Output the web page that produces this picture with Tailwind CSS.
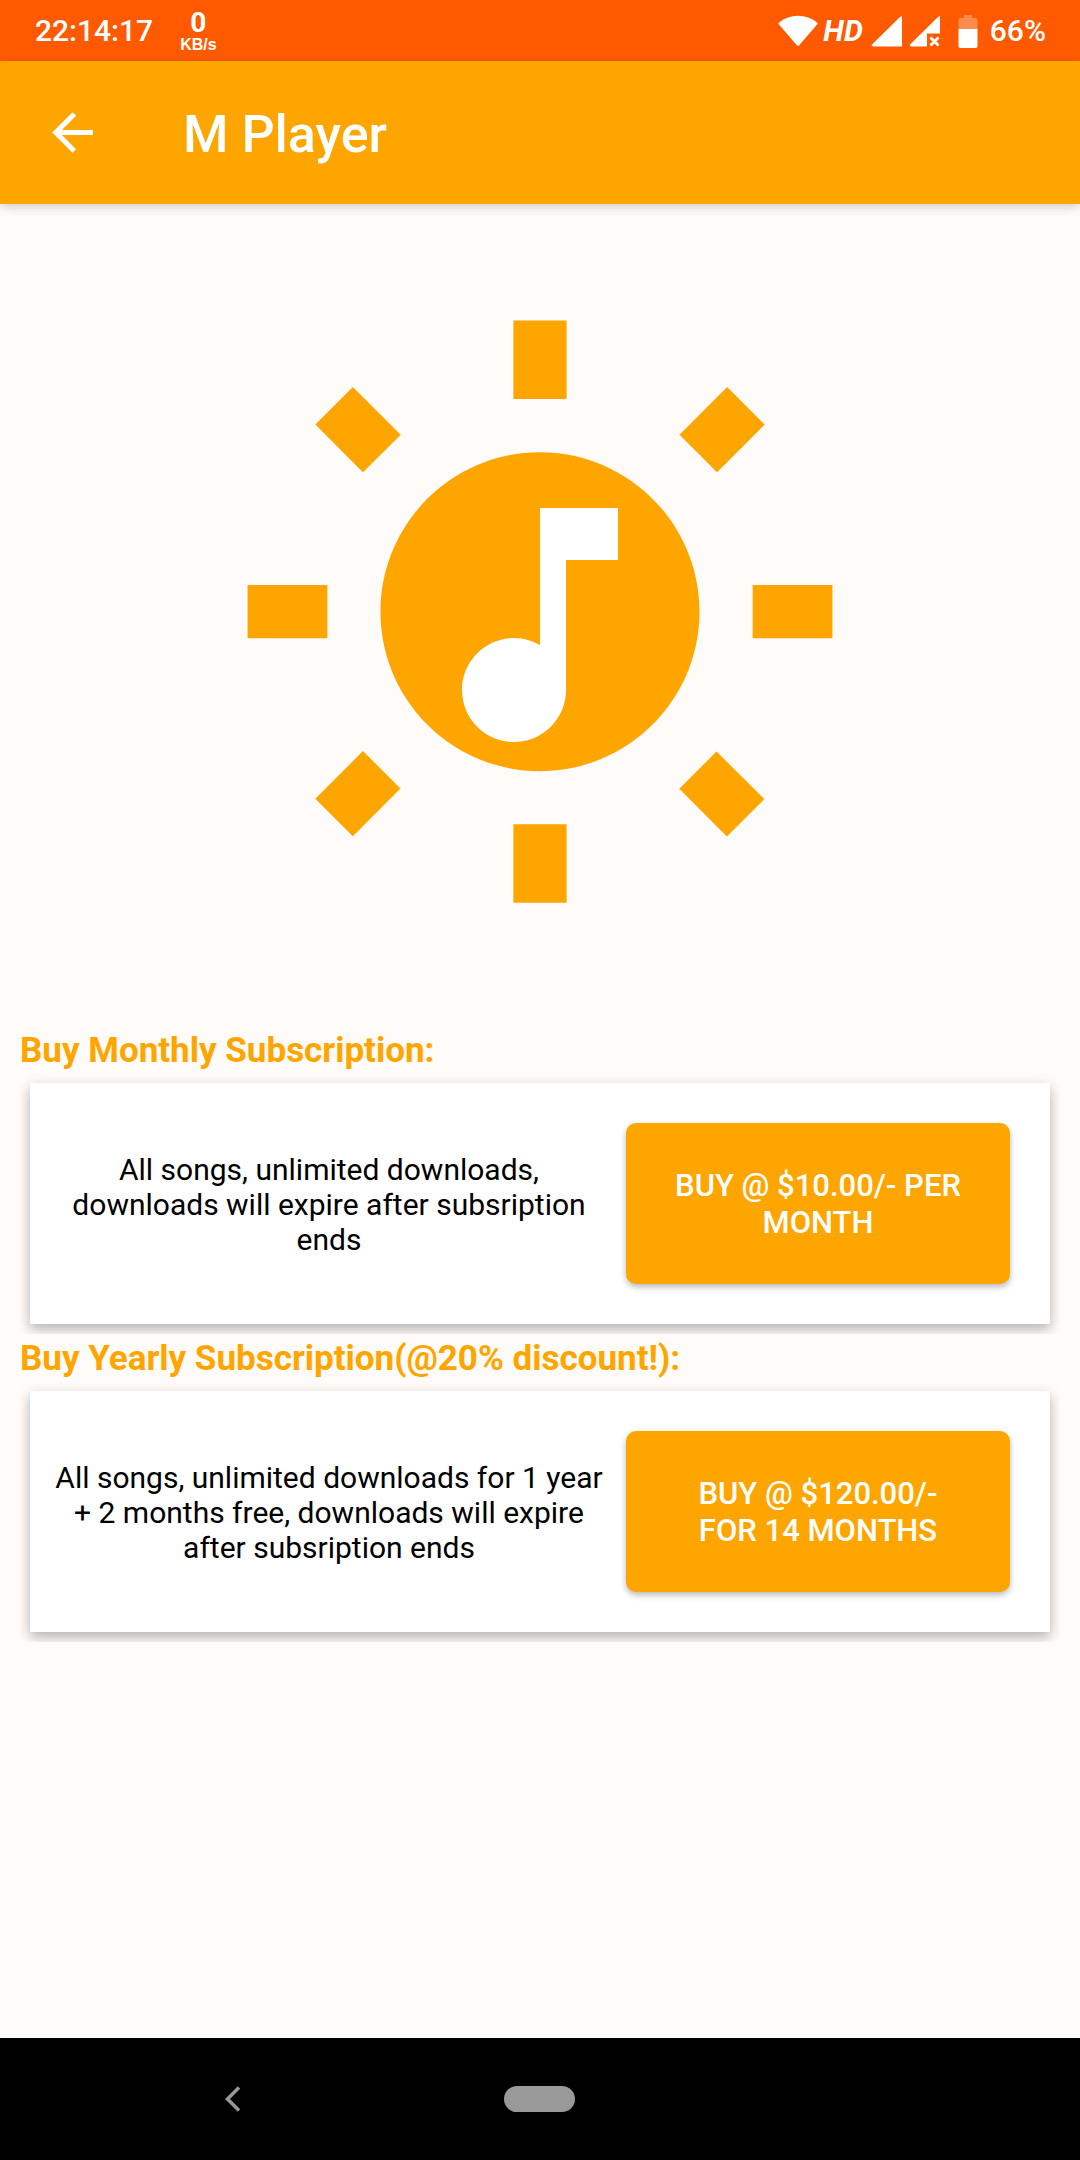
<!DOCTYPE html>
<html lang="en">
<head>
<meta charset="utf-8">
<meta name="viewport" content="width=device-width, initial-scale=1">
<title>M Player</title>
<script src="https://cdn.jsdelivr.net/npm/@tailwindcss/browser@4"></script>
</head>
<body class="flex min-h-screen flex-col bg-[#fffbf8] font-['Roboto',sans-serif] text-black">

<!-- Status bar -->
<div class="flex h-[61px] items-center justify-between bg-[#ff5a00] pr-[34px] pl-[35px] text-white">
  <div class="flex items-center gap-[27px]">
    <span class="text-[30px] leading-[35px] font-medium">22:14:17</span>
    <div class="flex flex-col items-center font-bold">
      <span class="text-[28px] leading-[28px]">0</span>
      <span class="font-['Liberation_Sans',sans-serif] text-[16px] leading-[16px]">KB/s</span>
    </div>
  </div>
  <div class="flex items-center">
    <svg class="h-8 w-10" viewBox="0 0 40 32" fill="#fff" stroke="#fff" stroke-width="2" stroke-linejoin="round" aria-hidden="true"><path d="M1.500 8.500C12-.5 28-.5 38.500 8.500L20 30z"/></svg>
    <span class="ml-[5px] text-[30px] leading-[35px] font-bold italic">HD</span>
    <svg class="ml-2 h-8 w-[31px]" viewBox="0 0 31 32" fill="#fff" aria-hidden="true"><path d="M31 1.500V31.500H2Q0 31 1 29.500L29 2Q30.500 1 31 1.500z"/></svg>
    <svg class="ml-[7px] h-8 w-[31px]" viewBox="0 0 31 32" aria-hidden="true"><path fill="#fff" d="M31 1.500V18.500H18V31.500H2Q0 31 1 29.500L29 2Q30.500 1 31 1.500z"/><path d="M21.500 22.500l8 8m0-8l-8 8" stroke="#fff" stroke-width="2.800"/></svg>
    <svg class="ml-[18px] h-[34px] w-5" viewBox="0 0 20 34" fill="#fff" aria-hidden="true"><path fill-opacity=".3" d="M6 1h8v3h3.500Q19.500 4 19.500 6v9H.5V6Q.5 4 2.500 4H6z"/><path d="M.5 15h19v17q0 2-2 2h-15q-2 0-2-2z"/></svg>
    <span class="ml-3 text-[30px] leading-[35px] font-medium">66%</span>
  </div>
</div>

<!-- App bar -->
<header class="flex h-[143px] items-center bg-[#ffa500] pl-9 text-white shadow-[0_3px_10px_rgba(0,0,0,0.18)]">
  <button type="button" aria-label="Back" class="flex size-[72px] items-center justify-center">
    <svg class="size-[61px]" viewBox="0 0 24 24" fill="#fff" aria-hidden="true"><path d="M20 11H7.830l5.590-5.590L12 4l-8 8 8 8 1.410-1.410L7.830 13H20v-2z"/></svg>
  </button>
  <h1 class="ml-[75px] pt-1 text-[52px] leading-[61px] font-medium">M Player</h1>
</header>

<main class="flex-1 px-5 pt-[102px]">
  <!-- Sun with a music note -->
  <svg class="mx-auto block size-[638px]" viewBox="0 0 638 638" role="img" aria-label="M Player logo">
    <path fill="#ffa500" transform="scale(26.583)" d="M6.760 4.840l-1.800-1.790-1.410 1.410 1.790 1.790 1.420-1.410zM4 10.500H1v2h3v-2zm9-9.950h-2V3.500h2V.55zm7.450 3.910l-1.410-1.410-1.790 1.790 1.410 1.410 1.790-1.790zm-3.210 13.700l1.790 1.800 1.410-1.410-1.800-1.790-1.400 1.400zM20 10.500v2h3v-2h-3zm-8-5c-3.310 0-6 2.690-6 6s2.690 6 6 6 6-2.690 6-6-2.690-6-6-6zm-1 16.950h2V19.500h-2v2.950zm-7.450-3.910l1.410 1.410 1.790-1.800-1.410-1.410-1.790 1.800z"/>
    <path fill="#fff" transform="translate(163 163) scale(13)" d="M12 3v10.550c-.59-.34-1.270-.55-2-.55-2.210 0-4 1.790-4 4s1.790 4 4 4 4-1.790 4-4V7h4V3h-6z"/>
  </svg>

  <section class="pt-[82px]">
    <h2 class="pt-[3px] text-[35px] leading-[44px] font-bold text-[#ffa500]">Buy Monthly Subscription:</h2>
    <div class="overflow-hidden p-[10px]">
      <div class="flex min-h-[241px] items-center bg-white pr-10 pl-5 shadow-[0_5px_12px_rgba(0,0,0,0.3)]">
        <p class="flex-1 pt-[2px] pr-[18px] text-center text-[30px] leading-[35px]">All songs, unlimited downloads, downloads will expire after subsription ends</p>
        <button type="button" class="min-h-[161px] w-2/5 rounded-[10px] bg-[#ffa500] px-11 text-[31px] leading-[37px] font-medium text-white uppercase shadow-[0_3px_6px_rgba(0,0,0,0.28)]">Buy @ $10.00/- per month</button>
      </div>
    </div>
  </section>

  <section>
    <h2 class="pt-[3px] text-[35px] leading-[44px] font-bold text-[#ffa500]">Buy Yearly Subscription(@20% discount!):</h2>
    <div class="overflow-hidden p-[10px]">
      <div class="flex min-h-[241px] items-center bg-white pr-10 pl-5 shadow-[0_5px_12px_rgba(0,0,0,0.3)]">
        <p class="flex-1 pt-[2px] pr-[18px] text-center text-[30px] leading-[35px]">All songs, unlimited downloads for 1 year + 2 months free, downloads will expire after subsription ends</p>
        <button type="button" class="min-h-[161px] w-2/5 rounded-[10px] bg-[#ffa500] px-11 text-[31px] leading-[37px] font-medium text-white uppercase shadow-[0_3px_6px_rgba(0,0,0,0.28)]">Buy @ $120.00/- for 14 months</button>
      </div>
    </div>
  </section>
</main>

<!-- System navigation -->
<nav class="grid h-[122px] grid-cols-3 items-center justify-items-center bg-black px-20" aria-label="System">
  <button type="button" aria-label="Back"><svg class="h-[26px] w-4" viewBox="0 0 16 26" fill="none" stroke="#999" stroke-width="3.500" aria-hidden="true"><path d="M14 1.500L2.500 13 14 24.500"/></svg></button>
  <button type="button" aria-label="Home" class="h-[26px] w-[71px] rounded-full bg-[#999]"></button>
</nav>
</body>
</html>
